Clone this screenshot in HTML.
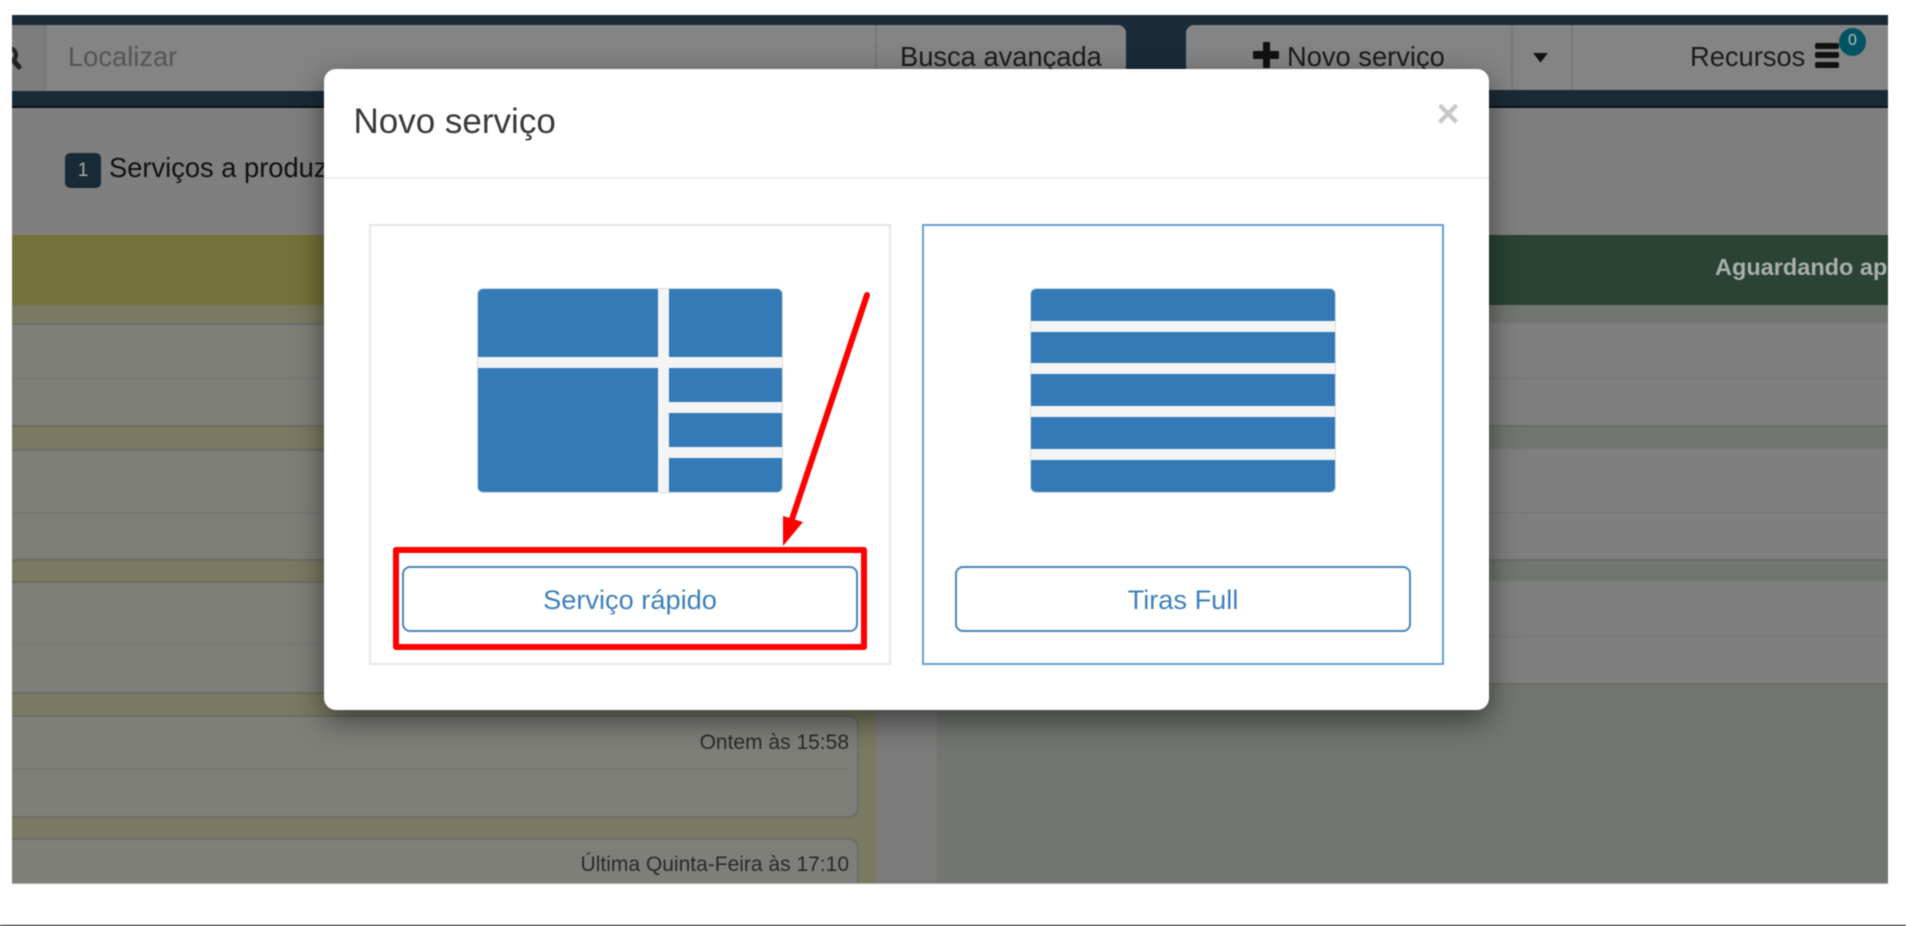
<!DOCTYPE html>
<html lang="pt-BR">
<head>
<meta charset="utf-8">
<title>Novo serviço</title>
<style>
html,body{margin:0;padding:0;background:#fff;}
body{width:1906px;height:926px;position:relative;overflow:hidden;font-family:"Liberation Sans",sans-serif;filter:blur(.45px);}
div,span{position:absolute;box-sizing:border-box;}
.t{white-space:nowrap;}
#page{left:12px;top:15px;width:1876px;height:869px;overflow:hidden;background:#7f7f7f;border-bottom:1px solid #aaa;}
#inner{left:-12px;top:-15px;width:1906px;height:926px;}
.card{background:#7e7f79;border:2px solid #6c6d66;border-radius:10px;left:-20px;width:879px;}
.cardr{background:#7f7f7f;border-bottom:2px solid #6c6d68;left:937px;width:960px;}
.dv{height:1px;background:#747570;}
.stamp{font-size:21px;line-height:26px;color:#2a2a2a;right:1057px;}
.bar{background:#f4f4f4;}
</style>
</head>
<body>
<div id="page"><div id="inner">
  <!-- navbar -->
  <div style="left:0;top:15px;width:1906px;height:93px;background:#1a2b38;border-bottom:2px solid #0c1216;"></div>
  <div style="left:12px;top:25px;width:1114px;height:66px;background:#848484;border-radius:0 8px 0 0;"></div>
  <div style="left:44px;top:25px;width:2px;height:66px;background:#777;"></div>
  <div style="left:12px;top:25px;width:32px;height:66px;background:#7d7d7d;"></div>
  <svg style="position:absolute;left:-2px;top:40px" width="30" height="32" viewBox="0 0 30 32"><circle cx="11" cy="15" r="7" fill="none" stroke="#222" stroke-width="4"/><path d="M15 20L21 27" stroke="#222" stroke-width="5" stroke-linecap="round"/></svg>
  <div class="t" style="left:68px;top:41px;font-size:27.3px;line-height:32px;color:#555;">Localizar</div>
  <div style="left:875px;top:25px;width:2px;height:66px;background:#777;"></div>
  <div class="t" style="left:900px;top:41px;font-size:27.3px;line-height:32px;color:#1c1c1c;">Busca avançada</div>

  <div style="left:1186px;top:25px;width:720px;height:65px;background:#848484;border-radius:8px 0 0 0;"></div>
  <div style="left:1511px;top:25px;width:2px;height:65px;background:#777;"></div>
  <div style="left:1571px;top:25px;width:2px;height:65px;background:#777;"></div>
  <div style="left:1263px;top:42px;width:7px;height:26px;background:#111;border-radius:1px;"></div>
  <div style="left:1253px;top:51px;width:26px;height:8px;background:#111;border-radius:1px;"></div>
  <div class="t" style="left:1287px;top:41px;font-size:27.3px;line-height:32px;color:#1c1c1c;">Novo serviço</div>
  <svg style="position:absolute;left:1533px;top:53px" width="16" height="10" viewBox="0 0 16 10"><path d="M0 0H15L7.500 9.500Z" fill="#111"/></svg>
  <div class="t" style="left:1690px;top:41px;font-size:27.3px;line-height:32px;color:#1c1c1c;">Recursos</div>
  <div style="left:1815px;top:43px;width:24px;height:6px;background:#111;border-radius:2px;"></div>
  <div style="left:1815px;top:52px;width:24px;height:6px;background:#111;border-radius:2px;"></div>
  <div style="left:1815px;top:62px;width:24px;height:6px;background:#111;border-radius:2px;"></div>
  <div style="left:1839px;top:28px;width:27px;height:28px;border-radius:50%;background:#035462;"></div>
  <div class="t" style="left:1839px;top:31px;width:27px;text-align:center;font-size:16px;line-height:20px;color:#bcbcbc;">0</div>

  <!-- heading -->
  <div style="left:65px;top:153px;width:36px;height:35px;background:#1a2b38;border-radius:5px;"></div>
  <div class="t" style="left:65px;top:160px;width:36px;text-align:center;font-size:19px;line-height:22px;color:#a8a8a8;">1</div>
  <div class="t" style="left:109px;top:152px;font-size:27.3px;line-height:32px;color:#111;">Serviços a produzir</div>

  <!-- left column -->
  <div style="left:0;top:235px;width:876px;height:70px;background:#757239;"></div>
  <div style="left:0;top:305px;width:876px;height:600px;background:#7a7a62;"></div>
  <div class="card" style="top:323px;height:104px;"></div><div class="dv" style="left:12px;width:837px;top:378px;"></div>
  <div class="card" style="top:449px;height:112px;"></div><div class="dv" style="left:12px;width:837px;top:512px;"></div>
  <div class="card" style="top:581px;height:113px;"></div><div class="dv" style="left:12px;width:837px;top:644px;"></div>
  <div class="card" style="top:715px;height:103px;"></div><div class="dv" style="left:12px;width:837px;top:768px;"></div>
  <div class="card" style="top:838px;height:110px;"></div>
  <div class="t stamp" style="top:730px;">Ontem às 15:58</div>
  <div class="t stamp" style="top:852px;">Última Quinta-Feira às 17:10</div>

  <!-- column gap -->
  <div style="left:876px;top:235px;width:61px;height:670px;background:#7b7b7b;"></div>

  <!-- right column -->
  <div style="left:937px;top:235px;width:969px;height:70px;background:#2a4334;"></div>
  <div class="t" style="left:1715px;top:253px;font-size:23.5px;line-height:28px;font-weight:bold;color:#a9aeab;">Aguardando aprovação</div>
  <div style="left:937px;top:305px;width:969px;height:600px;background:#717670;"></div>
  <div class="cardr" style="top:323px;height:104px;"></div><div class="dv" style="left:937px;width:951px;top:378px;"></div>
  <div class="cardr" style="top:449px;height:112px;"></div><div class="dv" style="left:937px;width:951px;top:512px;"></div>
  <div class="cardr" style="top:581px;height:104px;"></div><div class="dv" style="left:937px;width:951px;top:636px;"></div>
</div></div>

<!-- bottom line -->
<div style="left:0;top:925px;width:1906px;height:1px;background:#000;"></div>

<!-- modal -->
<div style="left:324px;top:69px;width:1165px;height:641px;background:#fff;border-radius:12px;box-shadow:0 10px 30px rgba(0,0,0,.5);"></div>
<div style="left:324px;top:177px;width:1165px;height:2px;background:#eee;"></div>
<div class="t" style="left:353.500px;top:101px;font-size:35px;line-height:42px;color:#3a3a3a;">Novo serviço</div>
<div class="t" style="left:1428px;top:91px;width:40px;text-align:center;font-size:40px;line-height:46px;font-weight:bold;color:#c8c8c8;">×</div>

<!-- left option -->
<div style="left:369px;top:224px;width:522px;height:441px;border:2px solid #e6e6e6;"></div>
<div style="left:477px;top:288px;width:306px;height:205px;background:#337ab7;border:1px solid #d8dde2;border-radius:6px;overflow:hidden;">
  <div class="bar" style="left:180px;top:0;width:11px;height:205px;"></div>
  <div class="bar" style="left:0;top:68px;width:306px;height:11px;"></div>
  <div class="bar" style="left:180px;top:113px;width:126px;height:11px;"></div>
  <div class="bar" style="left:180px;top:158px;width:126px;height:11px;"></div>
</div>
<div class="t" style="left:402px;top:566px;width:456px;height:66px;border:2px solid #4a86bd;border-radius:8px;text-align:center;font-size:27.2px;line-height:63px;color:#3f80bb;">Serviço rápido</div>

<!-- right option -->
<div style="left:922px;top:224px;width:522px;height:441px;border:2px solid #659fd6;"></div>
<div style="left:1030px;top:288px;width:306px;height:205px;background:#337ab7;border:1px solid #d8dde2;border-radius:6px;overflow:hidden;">
  <div class="bar" style="left:0;top:32px;width:306px;height:11px;"></div>
  <div class="bar" style="left:0;top:74px;width:306px;height:11px;"></div>
  <div class="bar" style="left:0;top:117px;width:306px;height:11px;"></div>
  <div class="bar" style="left:0;top:160px;width:306px;height:11px;"></div>
</div>
<div class="t" style="left:955px;top:566px;width:456px;height:66px;border:2px solid #4a86bd;border-radius:8px;text-align:center;font-size:27.2px;line-height:63px;color:#3f80bb;">Tiras Full</div>

<!-- annotation -->
<div style="left:393px;top:547px;width:474px;height:103px;border:6px solid #f00;border-radius:3px;"></div>
<svg style="position:absolute;left:770px;top:285px" width="110" height="270" viewBox="0 0 110 270">
  <path d="M97 10L20 240" stroke="#f00" stroke-width="6" stroke-linecap="round" fill="none"/>
  <path d="M13 231L33 237L13 261Z" fill="#f00"/>
</svg>
</body>
</html>
